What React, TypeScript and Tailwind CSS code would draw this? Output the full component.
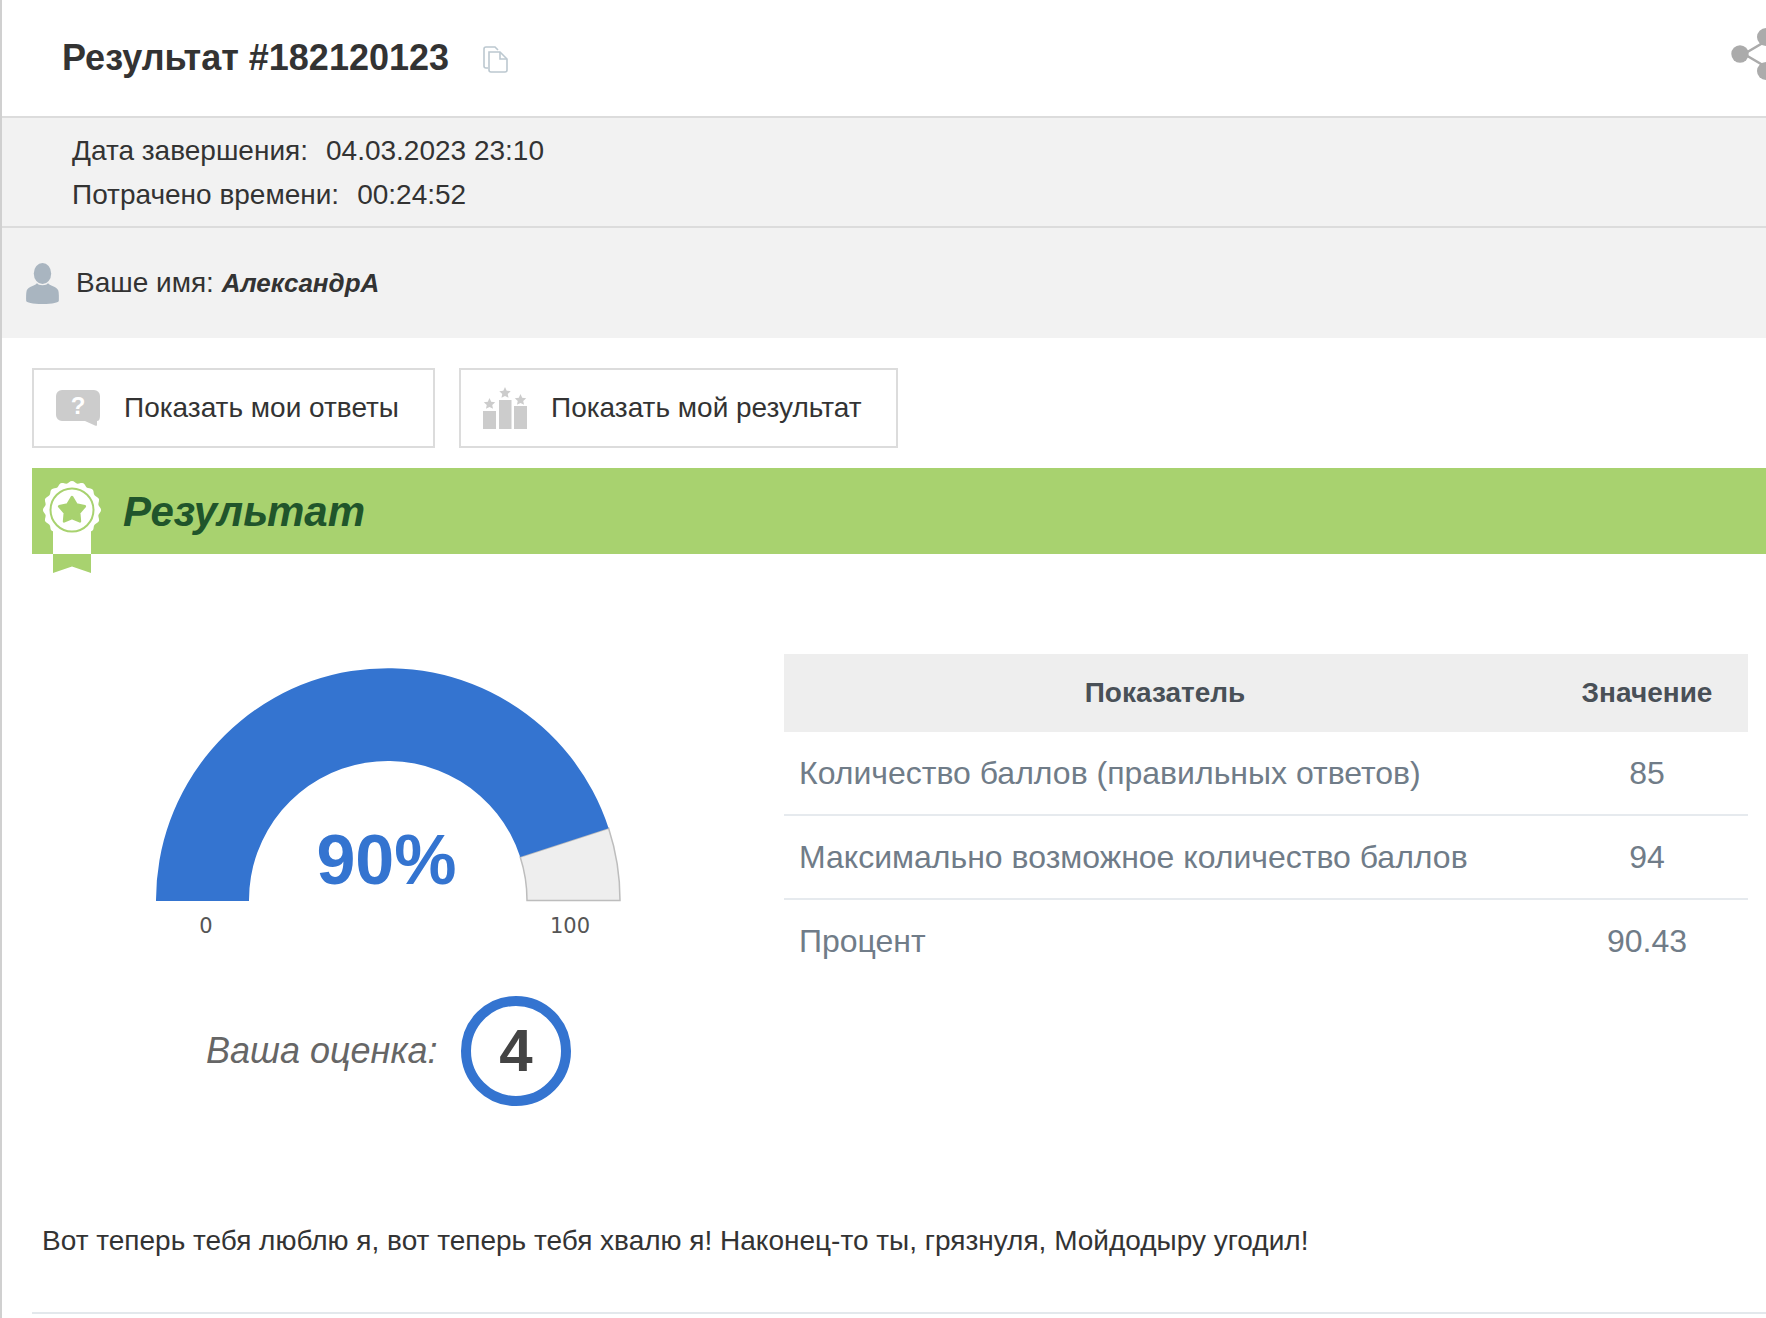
const font = "font-['Liberation_Sans',Arial,sans-serif]";
const buttonStyle =
    "flex h-[80px] items-center border-2 border-[#dcdcdc] bg-white text-[28px] text-[#333]";

const rows = [
    ["Количество баллов (правильных ответов)", "85"],
    ["Максимально возможное количество баллов", "94"],
    ["Процент", "90.43"],
];

function CopyIcon() {
    return (
        <svg width="25" height="27" viewBox="0 0 25 27" fill="none" stroke="#bcc8d0" strokeWidth="1.6" className="ml-[34px] mt-[3px]">
            <path d="M5 22H3a2 2 0 0 1-2-2V3a2 2 0 0 1 2-2h9l3 3" />
            <path d="M6 6h11l7 7v11a2 2 0 0 1-2 2H8a2 2 0 0 1-2-2z" fill="white" />
            <path d="M17 6v7h7" />
        </svg>
    );
}

function ShareIcon() {
    return (
        <svg width="40" height="52" viewBox="0 0 40 52" className="mb-[8px] mr-[-5px] shrink-0">
            <path d="M13 26L35 13M13 26L35 39" stroke="#ababab" strokeWidth="2.5" />
            <circle cx="9" cy="26" r="8.7" fill="#ababab" />
            <circle cx="35" cy="9" r="9" fill="#ababab" />
            <circle cx="35" cy="43" r="9" fill="#ababab" />
        </svg>
    );
}

function PersonIcon() {
    return (
        <svg width="33" height="41" viewBox="0 0 33 41" fill="#a9b5c0">
            <ellipse cx="16.5" cy="10.5" rx="8.7" ry="10.5" />
            <path d="M11 20c-1 2.500-9 3.500-10.300 7.500C0 30 0 35 .2 38c.1 1.500 6 3 16.300 3s16.200-1.500 16.300-3c.2-3 .2-8-.5-10.500C31 23.500 23 22.500 22 20c-1 3-10 3-11 0z" />
        </svg>
    );
}

function QuestionIcon() {
    return (
        <svg width="44" height="36" viewBox="0 0 44 36">
            <path d="M6 0h32a6 6 0 0 1 6 6v20c0 3-1 5-3 5v4c0 1-1 1-2 .5L29 31H6a6 6 0 0 1-6-6V6a6 6 0 0 1 6-6z" fill="#cccccc" />
            <text x="22" y="24" textAnchor="middle" fontSize="24" fontWeight="700" fill="white" fontFamily="Liberation Sans">?</text>
        </svg>
    );
}

function star(cx: number, cy: number, r: number, inner = 0.48) {
    const pts = [];
    for (let i = 0; i < 10; i++) {
        const a = (Math.PI / 5) * i - Math.PI / 2;
        const rr = i % 2 === 0 ? r : r * inner;
        pts.push(`${(cx + rr * Math.cos(a)).toFixed(2)},${(cy + rr * Math.sin(a)).toFixed(2)}`);
    }
    return pts.join(" ");
}

function BarsIcon() {
    return (
        <svg width="44" height="42" viewBox="0 0 44 42" fill="#cccccc">
            <polygon points={star(6.500, 17, 6)} />
            <polygon points={star(22, 6, 6)} />
            <polygon points={star(37.500, 13, 6)} />
            <rect x="0" y="24" width="13" height="18" />
            <rect x="16" y="13" width="12.500" height="29" />
            <rect x="31" y="19" width="13" height="23" />
        </svg>
    );
}

function wavy(cx: number, cy: number, r: number) {
    let d = "";
    for (let i = 0; i <= 120; i++) {
        const a = (Math.PI * 2 * i) / 120;
        const rr = r + 1.1 * Math.cos(a * 16);
        d += `${i === 0 ? "M" : "L"}${(cx + rr * Math.cos(a)).toFixed(2)} ${(cy + rr * Math.sin(a)).toFixed(2)}`;
    }
    return d + "Z";
}

function Badge() {
    return (
        <svg width="60" height="86" viewBox="0 0 60 86" className="absolute left-[11px] top-[19px] overflow-visible">
            <rect x="10" y="40" width="38" height="27" fill="white" />
            <path d="M10 67h38v19l-19-6.500L10 86z" fill="#a8d26f" />
            <path d={wavy(29, 23, 28)} fill="white" />
            <circle cx="29" cy="23" r="21.500" fill="none" stroke="#a8d26f" strokeWidth="2" />
            <polygon points={star(29, 23.500, 13.500, 0.56)} fill="#a8d26f" stroke="#a8d26f" strokeWidth="2.500" strokeLinejoin="round" />
        </svg>
    );
}

function Gauge() {
    return (
        <svg width="468" height="280" viewBox="154 666 468 280" className="ml-[122px] mt-[12px] block">
            <path d="M608.600 828.300A232 232 0 0 1 620 900.500H527A139 139 0 0 0 520.200 857Z" fill="#eeeeee" stroke="#bdbdbd" strokeWidth="1.500" />
            <path d="M156 901A232 232 0 0 1 608.600 828.300L520.200 857A139 139 0 0 0 249 901Z" fill="#3474d0" />
            <text x="386.500" y="884" textAnchor="middle" fontSize="70" fontWeight="700" fill="#3474d0" fontFamily="Liberation Sans">90%</text>
            <text x="206" y="933" textAnchor="middle" fontSize="21" fill="#555" fontFamily="DejaVu Sans">0</text>
            <text x="570" y="933" textAnchor="middle" fontSize="21" fill="#555" fontFamily="DejaVu Sans">100</text>
        </svg>
    );
}

export default function App() {
    return (
        <div className={`${font} h-[1318px] w-full overflow-hidden border-l-2 border-[#d0d0d0] bg-white text-[#333]`}>
            <header className="flex h-[118px] items-center justify-between border-b-2 border-[#dcdcdc] pl-[60px]">
                <div className="flex items-center">
                    <h1 className="text-[36px] font-bold">Результат #182120123</h1>
                    <CopyIcon />
                </div>
                <ShareIcon />
            </header>

            <section className="h-[110px] border-b-2 border-[#dcdcdc] bg-[#f2f2f2] pl-[70px] pt-[11px] text-[28px] leading-[44px]">
                <div className="flex">
                    <span>Дата завершения:</span>
                    <span className="ml-[18px]">04.03.2023 23:10</span>
                </div>
                <div className="flex">
                    <span>Потрачено времени:</span>
                    <span className="ml-[18px]">00:24:52</span>
                </div>
            </section>

            <section className="flex h-[110px] items-center bg-[#f2f2f2] pl-[24px] text-[28px]">
                <PersonIcon />
                <span className="ml-[17px]">
                    Ваше имя: <b className="text-[26px] italic">АлександрА</b>
                </span>
            </section>

            <div className="flex gap-6 pl-[30px] pt-[30px]">
                <button className={`${buttonStyle} w-[403px] pl-[22px]`}>
                    <QuestionIcon />
                    <span className="ml-[24px]">Показать мои ответы</span>
                </button>
                <button className={`${buttonStyle} w-[439px] pl-[22px]`}>
                    <BarsIcon />
                    <span className="ml-[24px]">Показать мой результат</span>
                </button>
            </div>

            <div className="relative ml-[30px] mt-[20px] flex h-[86px] items-center bg-[#a8d26f] pl-[91px] text-[42px] font-bold italic text-[#20552b]">
                <Badge />
                Результат
            </div>

            <div className="flex pl-[30px] pt-[100px]">
                <div className="w-[752px] shrink-0">
                    <Gauge />
                    <div className="ml-[174px] mt-[50px] flex items-center">
                        <span className="w-[255px] text-[36px] italic text-[#666]">Ваша оценка:</span>
                        <div className="flex h-[110px] w-[110px] items-center justify-center rounded-full border-[10px] border-[#3474d0] text-[60px] font-bold text-[#444]">
                            4
                        </div>
                    </div>
                </div>
                <table className="h-fit w-[964px] border-collapse text-[32px] text-[#707c88]">
                    <thead>
                        <tr className="h-[78px] bg-[#eeeeee] text-[28px] text-[#495057]">
                            <th className="font-bold">Показатель</th>
                            <th className="w-[202px] font-bold">Значение</th>
                        </tr>
                    </thead>
                    <tbody>
                        {rows.map(([name, value], i) => (
                            <tr key={name} className={`${i === 1 ? "h-[84px]" : "h-[83px]"} ${i < 2 ? "border-b-2 border-[#e6eaee]" : ""}`}>
                                <td className="pl-[15px]">{name}</td>
                                <td className="text-center">{value}</td>
                            </tr>
                        ))}
                    </tbody>
                </table>
            </div>

            <p className="ml-[40px] mt-[114px] text-[28px]">
                Вот теперь тебя люблю я, вот теперь тебя хвалю я! Наконец-то ты, грязнуля, Мойдодыру угодил!
            </p>
            <div className="ml-[30px] mt-[50px] h-[2px] bg-[#e3e8ec]" />
        </div>
    );
}
